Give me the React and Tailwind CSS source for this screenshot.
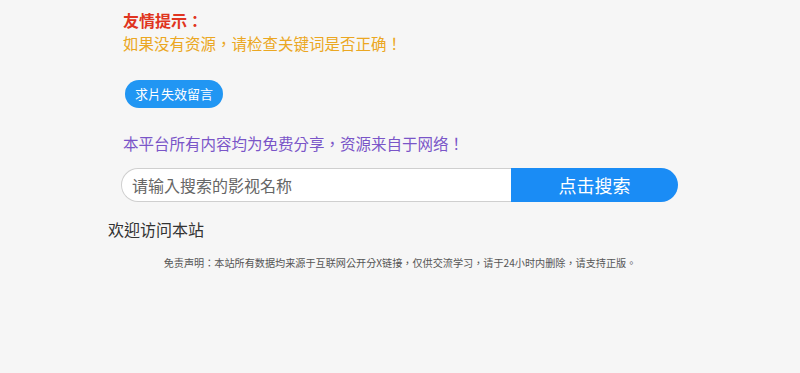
export default function App() {
  return (
    <div className="min-h-[373px] w-[800px] bg-[#f6f6f6] font-['Noto_Sans_CJK_TC',sans-serif]">
      <div className="pl-[123px] pt-[9px]">
        <div className="text-[16px] leading-[22px] font-bold text-[#e03420]">友情提示：</div>
        <div className="mt-[1px] text-[15.5px] leading-[22px] text-[#eba722]">如果没有资源，请检查关键词是否正确！</div>
        <button className="mt-[26px] ml-[2px] h-[28px] w-[98px] rounded-full bg-[#2196f3] text-[13px] text-white">求片失效留言</button>
        <div className="mt-[24px] text-[15.5px] leading-[22px] text-[#7a55c8]">本平台所有内容均为免费分享，资源来自于网络！</div>
      </div>
      <div className="ml-[121px] mt-[14px] flex h-[34px] w-[557px]">
        <div className="flex flex-1 items-center rounded-l-[17px] border border-r-0 border-[#cfcfcf] bg-white pl-[10px] text-[16px] text-[#666]">请输入搜索的影视名称</div>
        <button className="w-[167px] rounded-r-[17px] bg-[#1a8cf5] text-[18px] text-white">点击搜索</button>
      </div>
      <div className="ml-[108px] mt-[16px] text-[16px] leading-[22px] text-[#333]">欢迎访问本站</div>
      <div className="mt-[16px] text-center text-[10.15px] leading-[14px] text-[#555]">免责声明：本站所有数据均来源于互联网公开分X链接，仅供交流学习，请于24小时内删除，请支持正版。</div>
    </div>
  );
}
